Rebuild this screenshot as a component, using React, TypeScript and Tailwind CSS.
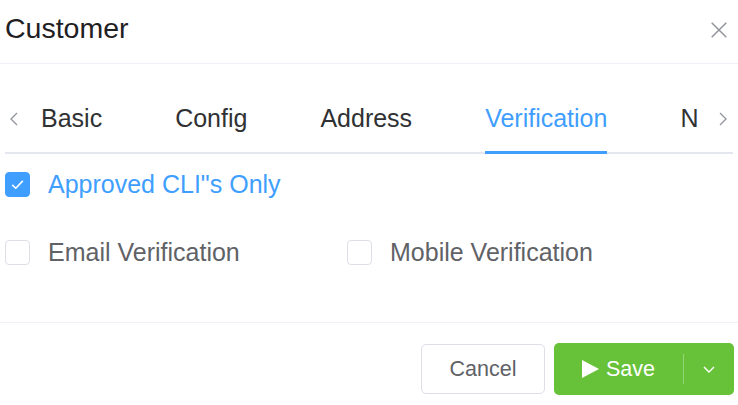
import React, { useState } from "react";

const tabs = ["Basic", "Config", "Address", "Verification", "N"];

const Checkbox = ({
  checked,
  label,
  onToggle,
}: {
  checked: boolean;
  label: string;
  onToggle: () => void;
}) => (
  <label className="flex items-center cursor-pointer" onClick={onToggle}>
    <span
      className={`flex items-center justify-center w-[25px] h-[25px] rounded-[4px] border ${
        checked ? "bg-[#409eff] border-[#409eff]" : "bg-white border-[#dcdfe6]"
      }`}
    >
      {checked && (
        <svg width="17" height="17" viewBox="0 0 16 16" fill="none">
          <path d="M3 8.3l3.4 3.2L13 4.6" stroke="white" strokeWidth="1.5" />
        </svg>
      )}
    </span>
    <span
      className={`ml-[18px] text-[25px] leading-none ${
        checked ? "text-[#409eff]" : "text-[#606266]"
      }`}
    >
      {label}
    </span>
  </label>
);

const App = () => {
  const [active, setActive] = useState("Verification");
  const [approved, setApproved] = useState(true);
  const [email, setEmail] = useState(false);
  const [mobile, setMobile] = useState(false);

  return (
    <div className="w-[738px] h-[405px] bg-white overflow-hidden font-['Liberation_Sans',Arial,sans-serif]">
      {/* Header */}
      <div className="flex items-center justify-between h-[64px] pl-[5px] pr-[10px] pb-[6px] border-b border-[#eef2f8]">
        <h2 className="text-[28.5px] leading-none text-[#1f2023]">Customer</h2>
        <svg width="18" height="18" viewBox="0 0 16 16" fill="none" className="mt-[2px]">
          <path d="M1.5 1.5l13 13M14.5 1.5l-13 13" stroke="#909399" strokeWidth="1.3" />
        </svg>
      </div>

      {/* Tabs */}
      <div className="mx-[5px] mt-[20px] relative">
        <div className="flex items-center h-[70px]">
          <span className="w-[36px] flex items-center pl-[3px]">
            <svg width="12" height="18" viewBox="0 0 12 18" fill="none">
              <path d="M9 3L3 9l6 6" stroke="#909399" strokeWidth="1.3" />
            </svg>
          </span>
          <div className="flex-1 flex items-stretch h-full gap-[73px] overflow-hidden">
            {tabs.map((t) => (
              <button
                key={t}
                onClick={() => setActive(t)}
                className={`relative h-full flex items-center pb-[2px] text-[25px] leading-none whitespace-nowrap ${
                  active === t ? "text-[#409eff]" : "text-[#303133]"
                }`}
              >
                {t}
                {active === t && (
                  <span className="absolute z-10 left-0 right-0 bottom-0 h-[3px] bg-[#409eff]" />
                )}
              </button>
            ))}
          </div>
          <span className="w-[20px] flex items-center justify-end pr-[4px]">
            <svg width="12" height="18" viewBox="0 0 12 18" fill="none">
              <path d="M3 3l6 6-6 6" stroke="#909399" strokeWidth="1.3" />
            </svg>
          </span>
        </div>
        <div className="absolute left-0 right-0 bottom-0 h-[2px] bg-[#e4e7ed]" />
      </div>

      {/* Body */}
      <div className="pl-[5px] pt-[18px] h-[169px] border-b border-[#eef2f8]">
        <Checkbox
          checked={approved}
          label={'Approved CLI"s Only'}
          onToggle={() => setApproved(!approved)}
        />
        <div className="flex mt-[43px]">
          <div className="w-[342px]">
            <Checkbox checked={email} label="Email Verification" onToggle={() => setEmail(!email)} />
          </div>
          <Checkbox checked={mobile} label="Mobile Verification" onToggle={() => setMobile(!mobile)} />
        </div>
      </div>

      {/* Footer */}
      <div className="flex justify-end items-center gap-[9px] pr-[4px] pt-[20px]">
        <button className="w-[124px] h-[50px] rounded-[5px] border border-[#dcdfe6] bg-white text-[21.5px] text-[#606266]">
          Cancel
        </button>
        <div className="flex h-[52px] rounded-[5px] bg-[#67c23a] text-white">
          <button className="flex items-center pl-[26px] w-[129px] text-[21.5px]">
            <svg width="20" height="20" viewBox="0 0 20 20" className="mr-[6px]">
              <path d="M2 1l17 9-17 9z" fill="white" />
            </svg>
            Save
          </button>
          <span className="w-px my-[11px] bg-[#95d475]" />
          <button className="w-[50px] flex items-center justify-center">
            <svg width="16" height="16" viewBox="0 0 16 16" fill="none">
              <path d="M3 6l5 5 5-5" stroke="white" strokeWidth="1.4" />
            </svg>
          </button>
        </div>
      </div>
    </div>
  );
};

export default App;
